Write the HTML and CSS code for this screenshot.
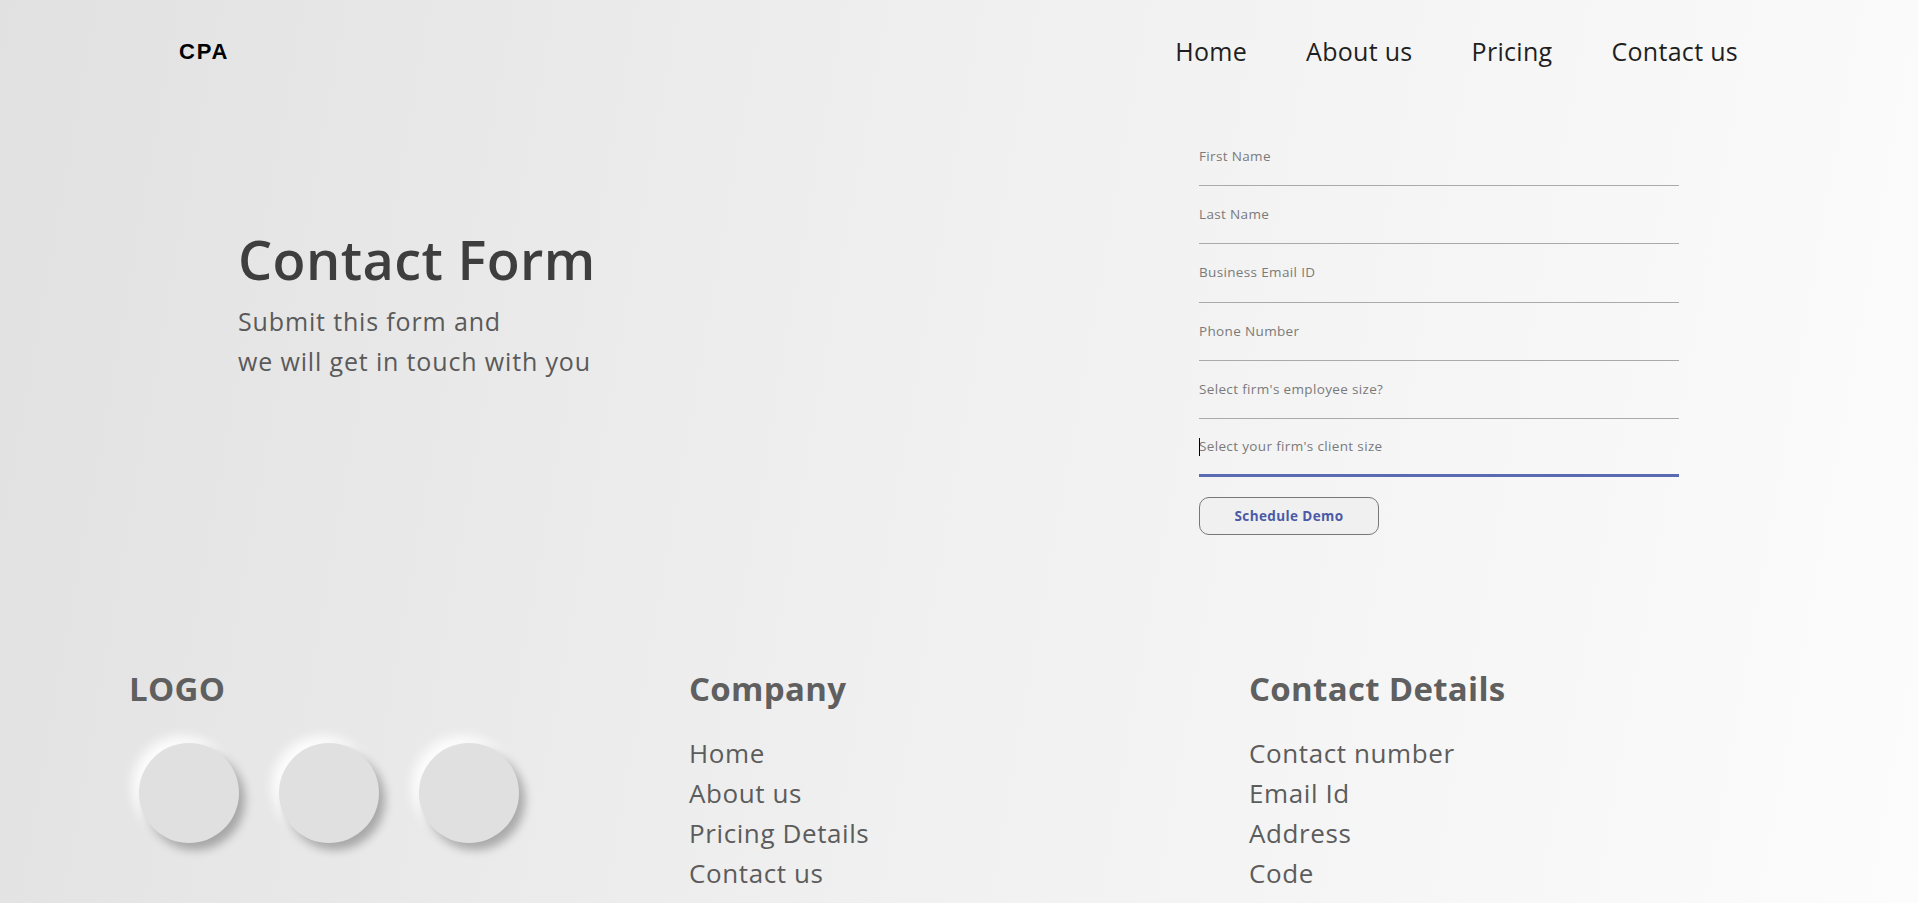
FILE: index.html
```html
<!DOCTYPE html>
<html lang="en">
<head>
<meta charset="utf-8">
<title>CPA - Contact Form</title>
<link rel="stylesheet" href="styles.css">
</head>
<body>
<div class="page">
  <header class="header">
    <div class="brand">CPA</div>
    <nav class="nav">
      <a href="#">Home</a>
      <a href="#">About us</a>
      <a href="#">Pricing</a>
      <a href="#">Contact us</a>
    </nav>
  </header>

  <section class="hero">
    <div class="intro">
      <h1 class="title">Contact Form</h1>
      <p class="subtitle">Submit this form and<br>we will get in touch with you</p>
    </div>
    <form class="form">
      <div class="field"><input type="text" placeholder="First Name"></div>
      <div class="field"><input type="text" placeholder="Last Name"></div>
      <div class="field"><input type="email" placeholder="Business Email ID"></div>
      <div class="field"><input type="tel" placeholder="Phone Number"></div>
      <div class="field"><input type="text" placeholder="Select firm's employee size?"></div>
      <div class="field field-focus"><span class="caret"></span><input type="text" placeholder="Select your firm's client size"></div>
      <button type="button" class="btn">Schedule Demo</button>
    </form>
  </section>

  <footer class="footer">
    <div class="col">
      <h2 class="col-title">LOGO</h2>
      <div class="socials">
        <span class="dot"></span>
        <span class="dot"></span>
        <span class="dot"></span>
      </div>
    </div>
    <div class="col">
      <h2 class="col-title">Company</h2>
      <ul class="links">
        <li>Home</li>
        <li>About us</li>
        <li>Pricing Details</li>
        <li>Contact us</li>
      </ul>
    </div>
    <div class="col">
      <h2 class="col-title">Contact Details</h2>
      <ul class="links">
        <li>Contact number</li>
        <li>Email Id</li>
        <li>Address</li>
        <li>Code</li>
      </ul>
    </div>
  </footer>
</div>
</body>
</html>
```

FILE: styles.css
```css
* { box-sizing: border-box; }

html, body {
  margin: 0;
  padding: 0;
}

body {
  font-family: "Open Sans", "Noto Sans", sans-serif;
  background: linear-gradient(100deg, #e1e1e1 0%, #efefef 45%, #fcfcfc 100%);
  min-height: 903px;
  overflow: hidden;
}

.page {
  width: 1918px;
  height: 903px;
  overflow: hidden;
}

.header {
  display: flex;
  align-items: center;
  justify-content: space-between;
  height: 102px;
  padding: 0 180px 0 179px;
}

.brand {
  font-family: "Liberation Sans", Arial, sans-serif;
  font-weight: 700;
  font-size: 22px;
  color: #000;
  letter-spacing: 1.8px;
  margin-top: 2px;
}

.nav {
  display: flex;
  gap: 59px;
}

.nav a {
  font-size: 25px;
  letter-spacing: 0.3px;
  color: #1f1f1f;
  text-decoration: none;
}

.hero {
  display: flex;
  align-items: flex-start;
  justify-content: space-between;
  padding: 26px 239px 0 238px;
  height: 565px;
}

.intro {
  margin-top: 99px;
}

.title {
  margin: 0;
  font-size: 54px;
  font-weight: 600;
  letter-spacing: 0.4px;
  color: #3e3e3e;
  line-height: 64px;
}

.subtitle {
  margin: 10px 0 0;
  font-size: 25px;
  letter-spacing: 0.85px;
  line-height: 40px;
  color: #5a5a5a;
}

.form {
  width: 480px;
  display: flex;
  flex-direction: column;
}

.field {
  position: relative;
  border-bottom: 1px solid #aaaaaa;
  height: 58.2px;
}

.field input {
  display: block;
  width: 100%;
  height: 100%;
  border: 0;
  background: transparent;
  padding: 19px 0 20px;
  font-family: inherit;
  font-size: 13.5px;
  letter-spacing: 0.35px;
  line-height: 18px;
  color: #333;
  outline: none;
}

.field input::placeholder {
  color: #7a7a7a;
}

.field-focus {
  border-bottom: 3px solid #5b6bb2;
}

.caret {
  position: absolute;
  left: 0;
  top: 19px;
  width: 1px;
  height: 18px;
  background: #000;
}

.btn {
  margin-top: 20px;
  width: 180px;
  height: 38px;
  border: 1px solid #777;
  border-radius: 10px;
  background: #f0f0f0;
  font-family: inherit;
  font-size: 13.5px;
  letter-spacing: 0.4px;
  font-weight: 700;
  color: #4b5aa6;
  cursor: pointer;
}

.footer {
  display: grid;
  grid-template-columns: 560px 560px 560px;
  padding: 0 0 0 129px;
}

.col-title {
  margin: 0;
  font-size: 33px;
  font-weight: 700;
  letter-spacing: 0.3px;
  color: #5f5f5f;
  line-height: 44px;
}

.socials {
  display: flex;
  gap: 40px;
  margin: 32px 0 0 10px;
}

.dot {
  width: 100px;
  height: 100px;
  border-radius: 50%;
  background: #e0e0e0;
  box-shadow: 6px 7px 10px rgba(0, 0, 0, 0.28), -7px -7px 12px rgba(255, 255, 255, 0.9);
}

.links {
  list-style: none;
  margin: 22px 0 0;
  padding: 0;
}

.links li {
  font-size: 26px;
  letter-spacing: 0.6px;
  line-height: 40px;
  color: #5c5c5c;
}
```
